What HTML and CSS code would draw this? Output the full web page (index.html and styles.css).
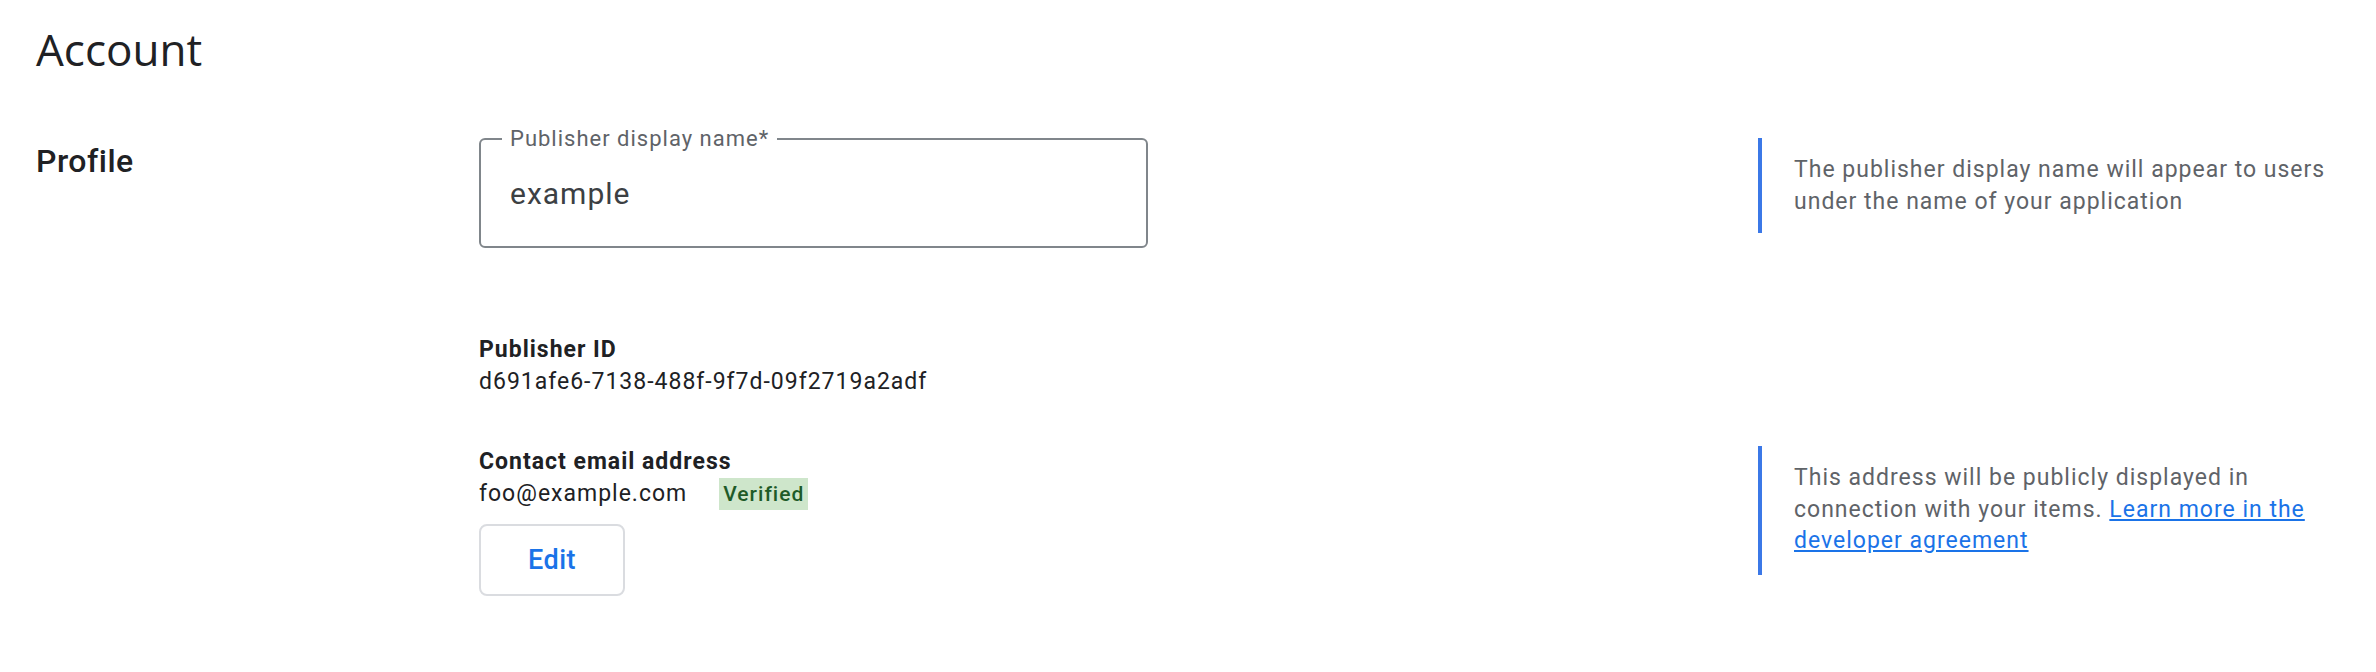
FILE: index.html
```html
<!DOCTYPE html>
<html lang="en">
<head>
    <meta charset="UTF-8">
    <title>Account</title>
    <link rel="stylesheet" href="styles.css">
</head>
<body>
    <div class="page">
        <h1>Account</h1>

        <section class="profile">
            <h2>Profile</h2>

            <div class="settings">
                <div class="setting">
                    <div class="main">
                        <div class="field">
                            <label class="field-label" for="display-name">Publisher display name*</label>
                            <input class="field-input" id="display-name" type="text" value="example">
                        </div>
                    </div>
                    <div class="help">
                        The publisher display name will appear to users under the name of your application
                    </div>
                </div>

                <div class="setting setting-id">
                    <div class="main">
                        <div class="item-title">Publisher ID</div>
                        <div class="item-value">d691afe6-7138-488f-9f7d-09f2719a2adf</div>
                    </div>
                </div>

                <div class="setting setting-email">
                    <div class="main">
                        <div class="item-title">Contact email address</div>
                        <div class="item-value">
                            foo@example.com
                            <span class="badge">Verified</span>
                        </div>
                        <button class="btn" type="button">Edit</button>
                    </div>
                    <div class="help help-tall">
                        This address will be publicly displayed in connection with your items.
                        <a href="#">Learn more in the developer agreement</a>
                    </div>
                </div>
            </div>
        </section>
    </div>
</body>
</html>
```

FILE: styles.css
```css
* {
    margin: 0;
    padding: 0;
    box-sizing: border-box;
}

body {
    font-family: 'Roboto', 'Liberation Sans', sans-serif;
    background: #ffffff;
    color: #202124;
}

.page {
    padding: 0 36px;
}

h1 {
    font-family: 'Open Sans', 'Liberation Sans', sans-serif;
    font-size: 44px;
    font-weight: 400;
    line-height: 52px;
    color: #202124;
    margin-top: 23px;
    margin-bottom: 63px;
}

.profile {
    display: grid;
    grid-template-columns: 443px 1fr;
    align-items: start;
}

h2 {
    font-family: 'Roboto', 'Liberation Sans', sans-serif;
    font-size: 32px;
    font-weight: 500;
    line-height: 40px;
    letter-spacing: 0.5px;
    color: #202124;
    margin-top: 3px;
}

.settings {
    display: flex;
    flex-direction: column;
}

.setting {
    display: grid;
    grid-template-columns: 1279px 1fr;
    align-items: start;
}

.setting-id {
    margin-top: 86px;
}

.setting-email {
    margin-top: 48px;
}

/* outlined text field */
.field {
    position: relative;
    width: 669px;
    height: 110px;
    border: 2px solid #80868b;
    border-radius: 6px;
    display: flex;
    align-items: center;
}

.field-label {
    position: absolute;
    left: 21px;
    top: -13px;
    padding: 0 8px;
    background: #ffffff;
    font-size: 22px;
    line-height: 24px;
    letter-spacing: 1px;
    color: #5f6368;
}

.field-input {
    border: none;
    outline: none;
    background: transparent;
    width: 100%;
    padding-left: 29px;
    font-family: 'Roboto', 'Liberation Sans', sans-serif;
    font-size: 30px;
    letter-spacing: 1px;
    color: #3c4043;
}

.item-title {
    font-size: 23px;
    font-weight: 700;
    line-height: 32px;
    letter-spacing: 1px;
    color: #202124;
}

.item-value {
    display: flex;
    align-items: center;
    font-size: 23px;
    line-height: 32px;
    letter-spacing: 1px;
    color: #202124;
}

.badge {
    margin-left: 32px;
    padding: 0 4px;
    background: #cee6cb;
    color: #1e5b28;
    font-size: 21px;
    font-weight: 500;
    line-height: 32px;
    letter-spacing: 1px;
}

.btn {
    margin-top: 14px;
    width: 146px;
    height: 72px;
    background: #ffffff;
    border: 2px solid #dadce0;
    border-radius: 8px;
    font-family: 'Roboto', 'Liberation Sans', sans-serif;
    font-size: 27px;
    font-weight: 500;
    letter-spacing: 0.5px;
    color: #1a73e8;
    cursor: pointer;
}

.help {
    border-left: 4px solid #3b78e7;
    padding: 16px 0 16px 32px;
    font-size: 23px;
    line-height: 31.5px;
    letter-spacing: 1px;
    color: #5f6368;
}

.help-tall {
    padding-bottom: 18px;
}

.help a {
    color: #1a73e8;
    text-decoration: underline;
}
```
